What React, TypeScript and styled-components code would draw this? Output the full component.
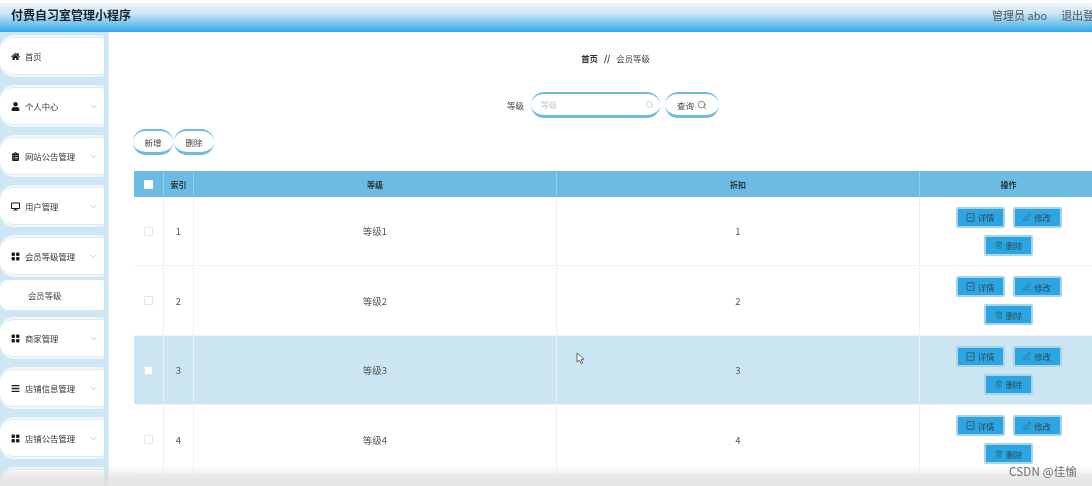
import React from 'react'
import styled, { createGlobalStyle } from 'styled-components'
import { ChevronDown, Search, PenLine, Trash2 } from 'lucide-react'
import { FaHome, FaUser, FaClipboardList, FaDesktop, FaBars } from 'react-icons/fa'
import { BsGridFill } from 'react-icons/bs'

const GlobalStyle = createGlobalStyle`
    html, body {
        margin: 0;
        padding: 0;
        width: 1092px;
        height: 486px;
        overflow: hidden;
        background: #fff;
        font-family: 'Noto Sans CJK SC', 'Liberation Sans', sans-serif;
    }
    * { box-sizing: border-box; }
`

const Page = styled.div`
    position: relative;
    width: 1092px;
    height: 486px;
    overflow: hidden;
    padding-top: 3px;
    filter: blur(0.45px);
`

const Header = styled.header`
    height: 29px;
    display: flex;
    align-items: center;
    justify-content: space-between;
    padding: 0 0 6px 11px;
    background: linear-gradient(to bottom, #eef6fb 0%, #cfe7f6 35%, #2fa9e8 100%);
`

const Title = styled.h1`
    margin: 0;
    font-size: 12px;
    line-height: 20px;
    font-weight: 700;
    color: #1c2228;
`

const UserBar = styled.div`
    display: flex;
    gap: 14px;
    width: 100px;
    flex: none;
    white-space: nowrap;
    overflow: hidden;
    font-size: 11px;
    color: #555;
`

const Body = styled.div`
    display: flex;
    height: 454px;
`

const Sidebar = styled.nav`
    width: 109px;
    flex: none;
    padding: 3px 4px 0 0;
    display: flex;
    flex-direction: column;
    background: #cfe6f4;
    border-right: 1px solid #e4f1f9;
    overflow: hidden;
`

const MenuItem = styled.div`
    flex: none;
    height: 42px;
    margin-bottom: 8px;
    display: flex;
    align-items: center;
    padding: 0 6px 0 11px;
    gap: 5px;
    background: #fff;
    border-top: 2px solid #f0f7fb;
    border-bottom: 2px solid #f0f7fb;
    border-radius: 14px 2px 2px 14px;
    box-shadow: inset 0 1px 0 #d9ecf7, inset 0 -1px 0 #d9ecf7;
    font-size: 8.4px;
    color: #333;
`

const SubItem = styled.div`
    flex: none;
    height: 30px;
    margin: -5px 0 7px;
    display: flex;
    align-items: center;
    padding-left: 28px;
    background: #fff;
    border-radius: 8px 2px 2px 8px;
    font-size: 8.4px;
    color: #444;
`

const MenuLabel = styled.span`
    flex: 1;
    white-space: nowrap;
`

const Main = styled.main`
    flex: 1;
    min-width: 0;
    padding: 19px 0 0 25px;
    background: #fff;
`

const Crumbs = styled.div`
    display: flex;
    justify-content: center;
    gap: 6px;
    height: 14px;
    padding-left: 5px;
    font-size: 8.4px;
    line-height: 14px;
    color: #444;

    b { font-weight: 700; color: #333; }
`

const SearchBar = styled.div`
    display: flex;
    justify-content: center;
    align-items: center;
    gap: 5px;
    margin-top: 27px;
    height: 26px;
`

const FieldLabel = styled.span`
    font-size: 8.5px;
    color: #444;
    margin-right: 2px;
`

const Pill = styled.div<{ $width: number }>`
    width: ${p => p.$width}px;
    height: 26px;
    flex: none;
    display: flex;
    align-items: center;
    justify-content: center;
    gap: 3px;
    background: #fff;
    border-top: 2px solid #6bbce0;
    border-bottom: 3px solid #6bbce0;
    border-radius: 13px;
    font-size: 8.5px;
    color: #444;
`

const SearchInput = styled(Pill)`
    justify-content: space-between;
    padding: 0 6px 0 10px;
    color: #c4c8cc;
    font-size: 8px;
`

const Actions = styled.div`
    display: flex;
    gap: 1px;
    margin: 11px 0 0 -1px;
    height: 28px;
`

const Table = styled.div`
    margin-top: 14px;
    width: 964px;
`

const Row = styled.div<{ $active?: boolean; $height: number }>`
    display: grid;
    grid-template-columns: 30px 30px 363px 363px 178px;
    height: ${p => p.$height}px;
    background: ${p => (p.$active ? '#cbe5f3' : '#fff')};
    border-bottom: 1px solid #f1f3f5;
`

const HeadRow = styled(Row)`
    background: #6cbbe3;
    border-bottom: none;
`

const Cell = styled.div`
    display: flex;
    align-items: center;
    justify-content: center;
    border-right: 1px solid #eef1f3;
    font-size: 9.5px;
    color: #555;
    min-width: 0;
`

const HeadCell = styled(Cell)`
    border-right: 1px solid #94cdea;
    font-weight: 700;
    font-size: 8px;
    color: #28323a;
`

const OpsCell = styled(Cell)`
    flex-wrap: wrap;
    align-content: center;
    gap: 7px 8px;
    padding: 0 30px;
`

const CheckBox = styled.span<{ $solid?: boolean }>`
    width: 9px;
    height: 9px;
    background: #fff;
    border-radius: 1px;
    border: ${p => (p.$solid ? 'none' : '1px solid #e2e5e8')};
`

const OpButton = styled.div`
    width: 49px;
    height: 21px;
    display: flex;
    align-items: center;
    justify-content: center;
    gap: 3px;
    background: #2ba6e2;
    border: 2px solid #a9d4e6;
    border-radius: 2px;
    font-size: 8.4px;
    color: #2f4a58;
`

const FootShade = styled.div`
    position: absolute;
    left: 0;
    right: 0;
    bottom: 0;
    height: 20px;
    background: linear-gradient(to bottom, rgba(225, 225, 225, 0) 0%, rgba(215, 215, 215, 0.6) 60%, rgba(225, 225, 225, 0.8) 100%);
    pointer-events: none;
`

const Watermark = styled.div`
    position: absolute;
    left: 1009px;
    top: 463px;
    font-size: 11.5px;
    line-height: 16px;
    color: #6d6d6d;
    letter-spacing: 0.2px;
`

const Cursor = styled.svg`
    position: absolute;
    left: 576px;
    top: 352px;
`

const TicketIcon = () => (
    <svg width="9" height="9" viewBox="0 0 9 9" fill="none" stroke="#33505f" strokeWidth="0.8">
        <rect x="1" y="0.8" width="7" height="7.4" />
        <path d="M2.8 4.5h3.4" />
    </svg>
)

const iconColor = '#1c1c1c'

const menus = [
    { label: '个人中心', icon: <FaUser size={9} color={iconColor} /> },
    { label: '网站公告管理', icon: <FaClipboardList size={9} color={iconColor} /> },
    { label: '用户管理', icon: <FaDesktop size={9} color={iconColor} /> },
    { label: '会员等级管理', icon: <BsGridFill size={9} color={iconColor} /> },
]

const lowerMenus = [
    { label: '商家管理', icon: <BsGridFill size={9} color={iconColor} /> },
    { label: '店铺信息管理', icon: <FaBars size={9} color={iconColor} /> },
    { label: '店铺公告管理', icon: <BsGridFill size={9} color={iconColor} /> },
    { label: '', icon: null },
]

const rows = [
    { id: 1, level: '等级1', discount: 1, height: 69 },
    { id: 2, level: '等级2', discount: 2, height: 70 },
    { id: 3, level: '等级3', discount: 3, height: 69, active: true },
    { id: 4, level: '等级4', discount: 4, height: 70 },
]

const SideItem = ({ label, icon }: { label: string; icon: React.ReactNode }) => (
    <MenuItem>
        {icon}
        <MenuLabel>{label}</MenuLabel>
        <ChevronDown size={9} color="#b5b9bd" />
    </MenuItem>
)

export default function App() {
    return (
        <Page>
            <GlobalStyle />
            <Header>
                <Title>付费自习室管理小程序</Title>
                <UserBar>
                    <span>管理员 abo</span>
                    <span>退出登录</span>
                </UserBar>
            </Header>
            <Body>
                <Sidebar>
                    <MenuItem>
                        <FaHome size={9} color={iconColor} />
                        <MenuLabel>首页</MenuLabel>
                    </MenuItem>
                    {menus.map(m => <SideItem key={m.label} {...m} />)}
                    <SubItem>会员等级</SubItem>
                    {lowerMenus.map(m => <SideItem key={m.label} {...m} />)}
                </Sidebar>
                <Main>
                    <Crumbs>
                        <b>首页</b>
                        <b>//</b>
                        <span>会员等级</span>
                    </Crumbs>
                    <SearchBar>
                        <FieldLabel>等级</FieldLabel>
                        <SearchInput $width={129}>
                            <span>等级</span>
                            <Search size={9} color="#c4c8cc" />
                        </SearchInput>
                        <Pill $width={54}>
                            查询
                            <Search size={10} color="#444" strokeWidth={1.5} />
                        </Pill>
                    </SearchBar>
                    <Actions>
                        <Pill $width={40}>新增</Pill>
                        <Pill $width={40}>删除</Pill>
                    </Actions>
                    <Table>
                        <HeadRow $height={26}>
                            <HeadCell><CheckBox $solid /></HeadCell>
                            <HeadCell>索引</HeadCell>
                            <HeadCell>等级</HeadCell>
                            <HeadCell>折扣</HeadCell>
                            <HeadCell>操作</HeadCell>
                        </HeadRow>
                        {rows.map(r => (
                            <Row key={r.id} $active={r.active} $height={r.height}>
                                <Cell><CheckBox /></Cell>
                                <Cell>{r.id}</Cell>
                                <Cell>{r.level}</Cell>
                                <Cell>{r.discount}</Cell>
                                <OpsCell>
                                    <OpButton><TicketIcon />详情</OpButton>
                                    <OpButton><PenLine size={8} color="#33505f" strokeWidth={1.5} />修改</OpButton>
                                    <OpButton><Trash2 size={8} color="#33505f" strokeWidth={1.5} />删除</OpButton>
                                </OpsCell>
                            </Row>
                        ))}
                    </Table>
                </Main>
            </Body>
            <FootShade />
            <Watermark>CSDN @佳愉</Watermark>
            <Cursor width="10" height="13" viewBox="0 0 10 13">
                <path d="M1 1 L1 10 L3.4 8 L5 11.5 L6.6 10.8 L5 7.4 L8 7.2 Z" fill="#fff" stroke="#444" strokeWidth="0.8" />
            </Cursor>
        </Page>
    )
}
